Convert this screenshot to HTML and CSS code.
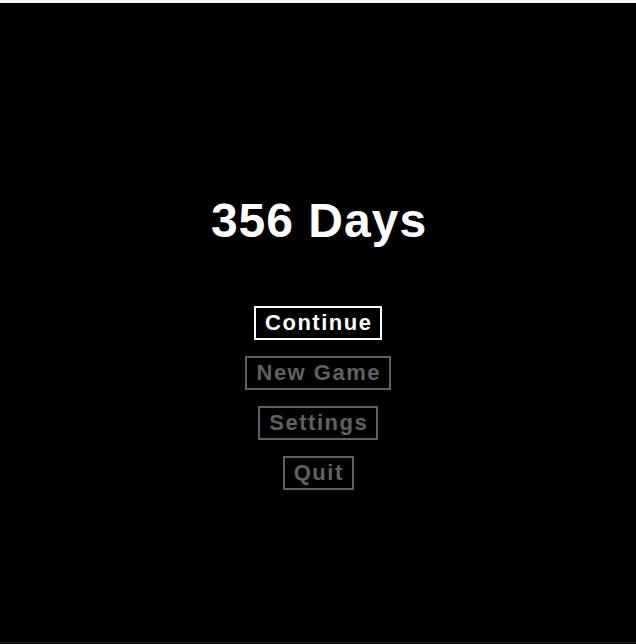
FILE: index.html
```html
<!DOCTYPE html>
<html>
<head>
<meta charset="utf-8">
<link rel="stylesheet" href="styles.css">
</head>
<body>
<div class="strip"></div>
<main class="screen">
  <h1 class="title">356 Days</h1>
  <nav class="menu">
    <button class="btn active">Continue</button>
    <button class="btn">New Game</button>
    <button class="btn">Settings</button>
    <button class="btn">Quit</button>
  </nav>
</main>
</body>
</html>
```
FILE: styles.css
```css
html, body {
  margin: 0;
  padding: 0;
  background: #000;
  width: 636px;
  height: 644px;
  overflow: hidden;
}
.strip {
  height: 3px;
  background: #faf6f1;
}
.screen {
  height: 640px;
  border-bottom: 1px solid #1e1e1e;
  background: #000;
  display: flex;
  flex-direction: column;
  align-items: center;
  padding-top: 190px;
  box-sizing: border-box;
  font-family: "Liberation Sans", Arial, sans-serif;
}
.title {
  margin: 0;
  color: #fff;
  font-size: 48px;
  line-height: 56px;
  font-weight: bold;
  letter-spacing: 1px;
  padding-left: 2px;
}
.menu {
  margin-top: 57px;
  display: flex;
  flex-direction: column;
  align-items: center;
  gap: 16px;
}
.btn {
  font-family: "Liberation Sans", Arial, sans-serif;
  font-size: 22px;
  font-weight: bold;
  letter-spacing: 1.5px;
  line-height: 26px;
  color: #606060;
  background: #000;
  border: 2px solid #606060;
  padding: 2px 7.75px 2px 9.25px;
  margin: 0;
}
.btn.active {
  color: #fff;
  border-color: #fff;
}
```
